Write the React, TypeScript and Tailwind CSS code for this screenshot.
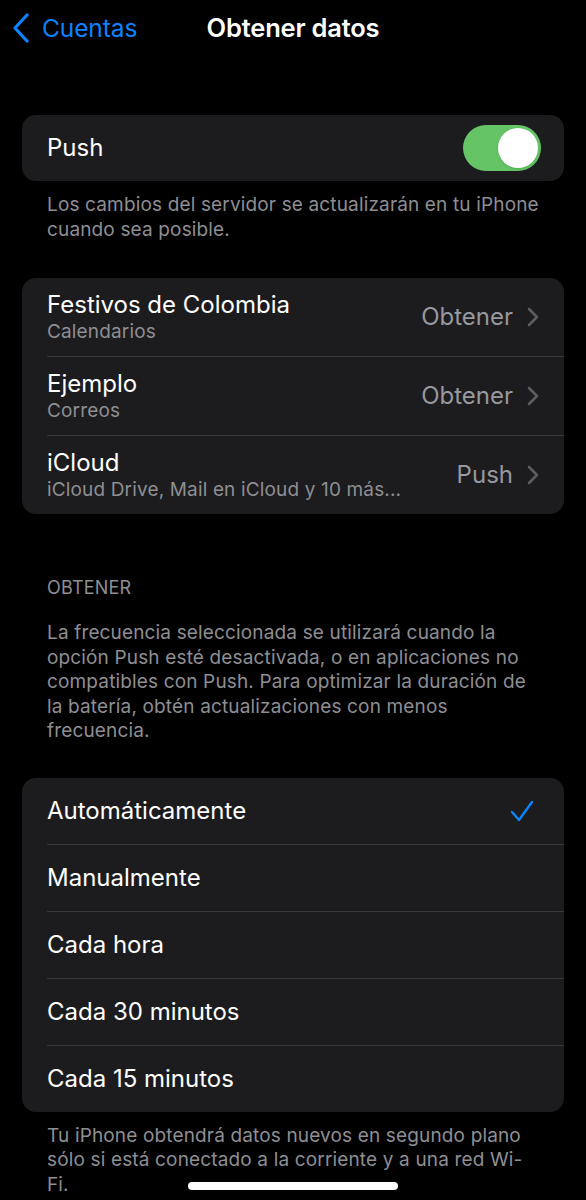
import React from 'react';

const font = { fontFamily: 'Inter, "Noto Sans", "Liberation Sans", sans-serif' };

function Chevron() {
  return (
    <svg width="12" height="20" viewBox="0 0 12 20" className="shrink-0">
      <polyline points="2,2 10,10 2,18" fill="none" stroke="#5b5b60" strokeWidth="2.6" strokeLinecap="round" strokeLinejoin="round" />
    </svg>
  );
}

function Separator() {
  return <div className="ml-[25px] h-px bg-[#38383a]" />;
}

const accounts = [
  { title: 'Festivos de Colombia', sub: 'Calendarios', value: 'Obtener' },
  { title: 'Ejemplo', sub: 'Correos', value: 'Obtener' },
  { title: 'iCloud', sub: 'iCloud Drive, Mail en iCloud y 10 más...', value: 'Push' },
];

const options = ['Automáticamente', 'Manualmente', 'Cada hora', 'Cada 30 minutos', 'Cada 15 minutos'];

export default function App() {
  return (
    <div className="relative h-[1200px] w-[586px] overflow-hidden bg-black text-white" style={font}>
      {/* Nav bar */}
      <div className="relative flex h-[56px] items-center">
        <div className="flex items-center pl-[12px] text-[#0a84ff]">
          <svg width="18" height="30" viewBox="0 0 18 30">
            <polyline points="15,2 3,15 15,28" fill="none" stroke="#0a84ff" strokeWidth="3.2" strokeLinecap="round" strokeLinejoin="round" />
          </svg>
          <span className="ml-[12px] text-[24.5px] tracking-[-0.1px]">Cuentas</span>
        </div>
        <div className="pointer-events-none absolute left-0 right-0 text-center text-[25.5px] font-semibold tracking-[-0.2px]">
          Obtener datos
        </div>
      </div>

      <div className="px-[22px]">
        {/* Push */}
        <div className="mt-[59px] flex h-[66px] items-center justify-between rounded-[14px] bg-[#1c1c1e] pl-[25px] pr-[23px]">
          <span className="text-[24px]">Push</span>
          <div className="flex h-[46px] w-[78px] items-center justify-end rounded-full bg-[#65c466] p-[3px]">
            <div className="h-[40px] w-[40px] rounded-full bg-white shadow" />
          </div>
        </div>
        <p className="mt-[11px] px-[25px] text-[19px] leading-[25px] tracking-[0.15px] text-[#8e8e93]">
          Los cambios del servidor se actualizarán en tu iPhone cuando sea posible.
        </p>

        {/* Accounts */}
        <div className="mt-[36px] overflow-hidden rounded-[14px] bg-[#1c1c1e]">
          {accounts.map((a, i) => (
            <div key={a.title}>
              {i > 0 && <Separator />}
              <div className="flex h-[78px] items-center justify-between pl-[25px] pr-[25px]">
                <div className="flex flex-col">
                  <span className="text-[24px] leading-[30px]">{a.title}</span>
                  <span className="text-[19px] leading-[24px] tracking-[0.15px] text-[#8e8e93]">{a.sub}</span>
                </div>
                <div className="flex items-center gap-[14px]">
                  <span className="text-[24px] text-[#98989f]">{a.value}</span>
                  <Chevron />
                </div>
              </div>
            </div>
          ))}
        </div>

        {/* Fetch */}
        <div className="mt-[63px] px-[25px] text-[18px] leading-[22px] tracking-[0.2px] text-[#8e8e93]">OBTENER</div>
        <p className="mt-[22px] pl-[25px] pr-[20px] text-[19px] leading-[24.5px] tracking-[0.15px] text-[#8e8e93]">
          La frecuencia seleccionada se utilizará cuando la opción Push esté desactivada, o en aplicaciones no compatibles con Push. Para optimizar la duración de la batería, obtén actualizaciones con menos frecuencia.
        </p>

        <div className="mt-[34px] overflow-hidden rounded-[14px] bg-[#1c1c1e]">
          {options.map((o, i) => (
            <div key={o}>
              {i > 0 && <Separator />}
              <div className="flex h-[66px] items-center justify-between pl-[25px] pr-[30px]">
                <span className="text-[24px]">{o}</span>
                {i === 0 && (
                  <svg width="24" height="24" viewBox="0 0 24 24">
                    <polyline points="2,13 9,21 22,3" fill="none" stroke="#0a84ff" strokeWidth="2.4" strokeLinecap="round" strokeLinejoin="round" />
                  </svg>
                )}
              </div>
            </div>
          ))}
        </div>
        <p className="mt-[12px] pl-[25px] pr-[20px] text-[19px] leading-[24.5px] tracking-[0.15px] text-[#8e8e93]">
          Tu iPhone obtendrá datos nuevos en segundo plano sólo si está conectado a la corriente y a una red Wi-Fi.
        </p>
      </div>

      {/* Home indicator */}
      <div className="absolute left-[188px] top-[1182px] h-[8px] w-[210px] rounded-full bg-white" />
    </div>
  );
}
